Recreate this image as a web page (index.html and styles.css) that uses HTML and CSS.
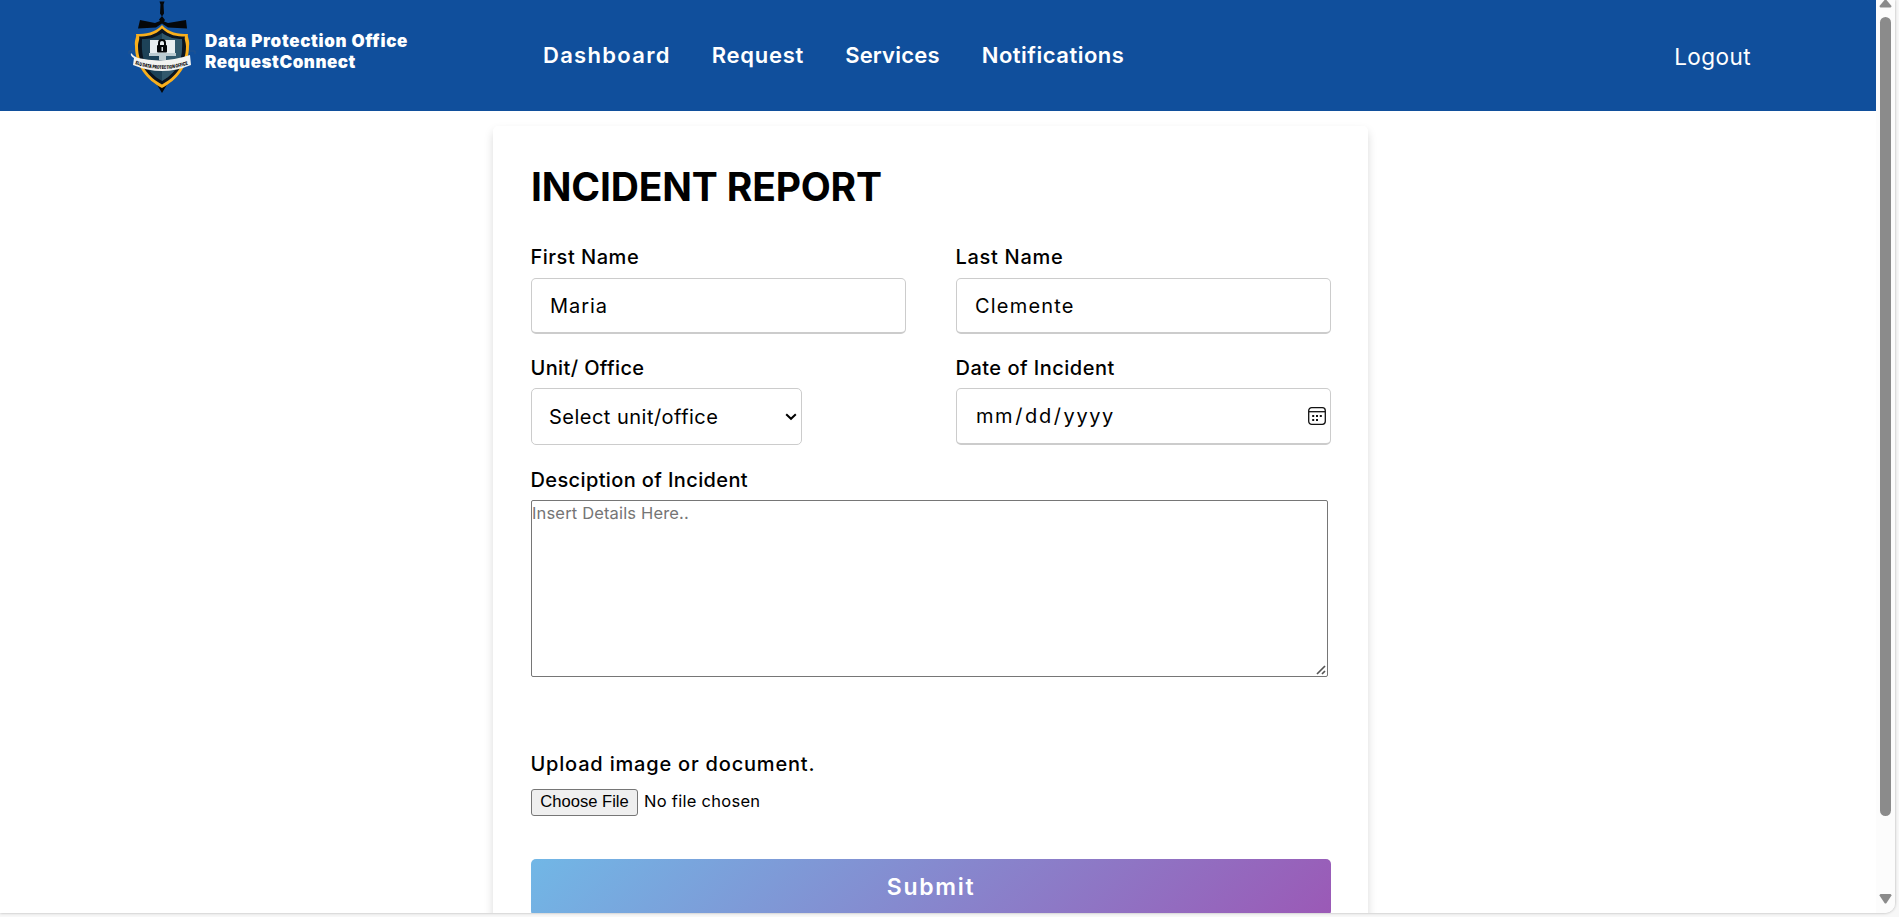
FILE: index.html
```html
<!DOCTYPE html>
<html lang="en">
<head>
<meta charset="utf-8">
<title>Incident Report</title>
<link rel="stylesheet" href="styles.css">
</head>
<body>
<div class="window">
  <div class="page">
    <header class="topbar">
      <a class="brand">
        <svg class="crest" width="70" height="94" viewBox="0 0 70 94">
          <path d="M31.500 1.500h5l-1 3 .5 9-2 3-2-3 .5-9z" fill="#050709"/>
          <path d="M34 16l3 4-1 1.500 4 1.500 18-3 1 8.500-19-1-6-4-6 4-18 1 2-8.500 15 3 5-2-1-1.500z" fill="#050709"/>
          <path d="M28 83h12l-6 10z" fill="#050709"/>
          <path d="M34 25c-7 8-16 9-26 9 1 3-2 6-1 12 0 20 12 34 27 42 15-8 27-22 27-42 1-6-2-9-1-12-10 0-19-1-26-9z" fill="#f8af1d"/>
          <path d="M34 28.500c-7 7-15 8-23 8 1 3-1 5-1 10 0 18 11 31 24 38 13-7 24-20 24-38 0-5-2-7-1-10-8 0-16-1-23-8z" fill="#0a1420"/>
          <path d="M34 33c-7 5-13 6-20 6-1 20 3 32 20 42 17-10 21-22 20-42-7 0-13-1-20-6z" fill="#1d4258"/>
          <path d="M34 33v48c17-10 21-22 20-42-7 0-13-1-20-6z" fill="#31586c"/>
          <rect x="22" y="40" width="25" height="13" fill="#e9eef0"/>
          <path d="M21 53h27v3H21zM31 56h7v4h-7z" fill="#bccbd1"/>
          <path d="M31 46v-3a3 3 0 0 1 6 0v3" fill="none" stroke="#050709" stroke-width="2"/>
          <rect x="29" y="45" width="10" height="7.500" rx="1" fill="#050709"/>
          <rect x="33.500" y="47" width="1.500" height="4" fill="#d5dadd"/>
          <path d="M1 54v-3h5M67 54v-3h-5" fill="none" stroke="#23558f" stroke-width="1"/>
          <path d="M3 53q-1 3 3 5l-1 7q29 12 58 0l-1-10q-26 9-52 3-4-1-7-5z" fill="#f2f3f1"/>
          <path id="ribbon" d="M7 64q27 10 55 0" fill="none"/>
          <text class="ribbon-text" textLength="54" lengthAdjust="spacingAndGlyphs"><textPath href="#ribbon">SLU DATA PROTECTION OFFICE</textPath></text>
        </svg>
        <span class="brand-name"><span class="brand-office">Data Protection Office</span><span class="brand-app">RequestConnect</span></span>
      </a>
      <nav class="menu"><a class="nav-dashboard">Dashboard</a><a class="nav-request">Request</a><a class="nav-services">Services</a><a class="nav-notifications">Notifications</a></nav>
      <a class="logout">Logout</a>
    </header>
    <form class="card">
      <h1 class="title">INCIDENT REPORT</h1>
      <div class="fields">
        <label class="field"><span class="label label-first">First Name</span><input class="control first-name" type="text" value="Maria"></label>
        <label class="field"><span class="label label-last">Last Name</span><input class="control last-name" type="text" value="Clemente"></label>
        <label class="field"><span class="label label-unit">Unit/ Office</span>
          <span class="overlay-box"><select class="select"><option>Select unit/office</option></select>
          <svg class="chevron" width="12" height="8" viewBox="0 0 12 8"><path d="M1.200 1.200L6 5.800l4.800-4.600" fill="none" stroke="#000" stroke-width="2"/></svg></span></label>
        <label class="field"><span class="label label-date">Date of Incident</span>
          <span class="overlay-box"><input class="control date" type="date">
          <svg class="calendar" width="18" height="18" viewBox="0 0 18 18"><rect x=".7" y=".7" width="16.600" height="16.600" rx="3" fill="none" stroke="#111" stroke-width="1.300"/><path d="M1 4.700h16" stroke="#111" stroke-width="1.300"/><path d="M4.200 8h2v2h-2zM8 8h2v2H8zM11.800 8h2v2h-2zM4.200 12h2v2h-2zM8 12h2v2H8z" fill="#111"/></svg></span></label>
      </div>
      <label class="field description"><span class="label label-description">Desciption of Incident</span>
        <span class="overlay-box"><textarea class="details" placeholder="Insert Details Here.."></textarea>
        <svg class="grip" width="10" height="10" viewBox="0 0 10 10"><path d="M1 9l8-8M6 9l3-3" stroke="#555" stroke-width="1.700"/></svg></span></label>
      <label class="field"><span class="label label-upload">Upload image or document.</span><input class="file" type="file"></label>
      <button class="submit" type="button">Submit</button>
    </form>
  </div>
  <div class="scrollbar">
    <svg class="arrow" width="13" height="8" viewBox="0 0 13 8"><path d="M5.500 0h2l5 6q0 1-1 1.500h-10q-1-.5-1-1.500z" fill="#8b8b8b"/></svg>
    <div class="thumb"></div>
    <svg class="arrow down" width="13" height="10" viewBox="0 0 13 10"><path d="M1.500 0h10q1 .5 1 1.500L7.500 9q-1 1-2 0L.5 1.500Q.5.500 1.500 0z" fill="#8b8b8b"/></svg>
  </div>
</div>
</body>
</html>
```
FILE: styles.css
```css
* { box-sizing: border-box; }
body { margin: 0; height: 917px; overflow: hidden; background: #f7f7f7; font-family: Inter, "Open Sans", sans-serif; color: #000; }
.window { display: flex; width: 1895px; height: 913px; overflow: hidden; background: #fff; border-bottom-right-radius: 10px; box-shadow: 0 0 3px rgba(0,0,0,.3); }
.page { width: 1876px; height: 913px; overflow: hidden; }

/* Scrollbar */
.scrollbar { display: flex; flex-direction: column; align-items: center; width: 19px; padding-bottom: 9px; background: #fcfcfc; }
.thumb { width: 11px; height: 799px; margin-top: 9px; border-radius: 6px; background: #8b8b8b; }
.arrow { display: block; }
.down { margin-top: auto; }

/* Top bar */
.topbar { display: flex; height: 111px; padding: 0 125px 0 128px; background: #104f9c; color: #fff; }
.brand { display: flex; width: 415px; }
.brand-name { display: flex; flex-direction: column; padding: 31px 0 0 7px; font-size: 17px; font-weight: 900; line-height: 20.5px; white-space: nowrap; }
.brand-office { letter-spacing: .68px; }
.brand-app { letter-spacing: .54px; }
.ribbon-text { font: 900 5px Inter, sans-serif; fill: #111; }
.menu { display: flex; padding-top: 38.5px; font-size: 22px; font-weight: 600; line-height: 33px; }
.nav-dashboard { margin-right: 41px; letter-spacing: 1.3px; }
.nav-request { margin-right: 41px; letter-spacing: .75px; }
.nav-services { margin-right: 42px; letter-spacing: .2px; }
.nav-notifications { letter-spacing: .5px; }
.logout { margin-left: auto; padding-top: 39.5px; font-size: 22.5px; line-height: 33px; letter-spacing: .45px; }

/* Form card */
.card { width: 875px; height: 830px; margin: 15px 0 0 493px; padding: 31px 37px 0 38px; border-radius: 5px; background: #fff; box-shadow: 0 5px 10px rgba(0,0,0,.15); }
.title { margin: 0 0 26px; font-size: 39px; font-weight: 700; line-height: 60px; letter-spacing: -.18px; }
.fields { display: grid; grid-template-columns: 375px 375px; column-gap: 50px; row-gap: 19px; }
.field { display: flex; flex-direction: column; align-items: flex-start; }
.label { height: 30px; margin: 0 0 5px -.5px; font-size: 20px; font-weight: 500; line-height: 30px; white-space: nowrap; }
.label-first { line-height: 28px; letter-spacing: .52px; }
.label-last { line-height: 28px; letter-spacing: .7px; }
.label-unit { letter-spacing: .37px; }
.label-date { letter-spacing: .48px; }
.label-description { letter-spacing: .38px; }
.label-upload { line-height: 30px; letter-spacing: .8px; }
.control { display: block; width: 375px; height: 56px; padding: 0 2px 0 18px; border: 1px solid #ccc; border-bottom-width: 2px; border-radius: 5px; background: #fff; font: 400 20px Inter, sans-serif; color: #000; }
.first-name { letter-spacing: .95px; }
.last-name { letter-spacing: 1.2px; }
.overlay-box { position: relative; display: block; }
.date { height: 57px; letter-spacing: 1.6px; }
.date::-webkit-calendar-picker-indicator { opacity: 0; }
.calendar { position: absolute; right: 5px; top: 19px; }
.select { display: block; appearance: none; width: 271px; height: 57px; padding: 0 0 0 17px; border: 1px solid #ccc; border-radius: 5px; background: #fff; font: 400 20px Inter, sans-serif; letter-spacing: .48px; color: #000; }
.chevron { position: absolute; right: 5px; top: 25px; }
.description { margin: 20px 0 72px; }
.details { display: block; width: 797px; height: 177px; padding: 0; border: 1px solid #767676; border-radius: 2px; font: 400 16.5px/25px Inter, sans-serif; letter-spacing: .16px; resize: none; }
.details::placeholder { color: #757575; }
.grip { position: absolute; right: 2px; bottom: 2px; }
.file { height: 31px; margin-top: 4px; font: 400 16.5px/27px Inter, sans-serif; letter-spacing: .28px; }
.file::file-selector-button { width: 107px; height: 27px; padding: 0; margin-right: 6px; border: 1px solid #767676; border-radius: 3px; background: #efefef; font: 400 16.6px "Liberation Sans", sans-serif; letter-spacing: 0; }
.submit { display: block; width: 800px; height: 57px; margin-top: 40px; padding: 0 0 2px; border: 0; border-radius: 5px; background: linear-gradient(135deg, #71b7e6, #9b59b6); color: #fff; font: 600 23px Inter, sans-serif; letter-spacing: 1.7px; }
```
